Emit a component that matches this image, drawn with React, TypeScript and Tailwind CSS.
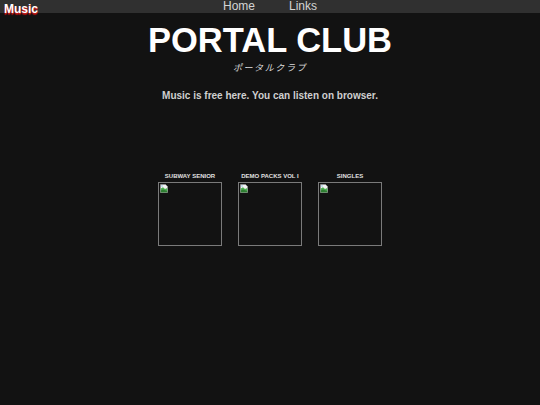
import React from 'react';

const albums = ['SUBWAY SENIOR', 'DEMO PACKS VOL I', 'SINGLES'];

const BrokenImage: React.FC = () => (
  <svg width="8" height="9" viewBox="0 0 8 9" className="absolute left-[1px] top-[1px]">
    <path d="M0.5 0.5 H5.5 L7.5 2.5 V8.5 H0.5 Z" fill="#f2f2f2" stroke="#9a9a9a" strokeWidth="0.6" />
    <path d="M0.8 4.5 L3 3.2 L5 5 L7.2 4 V8.2 H0.8 Z" fill="#4caf50" />
    <path d="M0.8 6.5 L3 5.5 L7.2 7 V8.2 H0.8 Z" fill="#2e7d32" />
    <circle cx="2" cy="2" r="0.8" fill="#8fc3ea" />
  </svg>
);

const App: React.FC = () => {
  return (
    <div className="relative min-h-[405px] w-full bg-[#121212] font-['Liberation_Sans',Arial,sans-serif]">
      <nav className="flex h-[13px] items-center justify-center gap-[34px] bg-[#303030] text-[12px] leading-[13px] text-[#d4d4d4]">
        <span>Home</span>
        <span>Links</span>
      </nav>
      <div className="absolute left-[4px] top-[2px] text-[12px] font-bold leading-[14px] text-white [text-shadow:0_1px_0_#c81e1e,0_2px_1px_#b01010]">
        Music
      </div>

      <main className="flex flex-col items-center">
        <h1 className="mt-[10px] text-[34.5px] font-bold leading-[34px] text-white">PORTAL CLUB</h1>
        <p className="mt-[6px] text-[9px] italic leading-[10px] tracking-[1.6px] text-[#dcdcdc] font-['Noto_Sans_CJK_JP',sans-serif]">
          ポータルクラブ
        </p>
        <p className="mt-[17px] text-[10px] font-bold leading-[12px] text-[#cfcfcf]">
          Music is free here. You can listen on browser.
        </p>

        <div className="mt-[70px] flex gap-[16px]">
          {albums.map((name) => (
            <div key={name} className="flex w-[64px] flex-col items-center">
              <span className="mb-[2px] whitespace-nowrap text-[6px] font-bold leading-[8px] text-[#e0e0e0]">{name}</span>
              <div className="relative h-[64px] w-[64px] border border-[#7a7a7a]">
                <BrokenImage />
              </div>
            </div>
          ))}
        </div>
      </main>
    </div>
  );
};

export default App;
